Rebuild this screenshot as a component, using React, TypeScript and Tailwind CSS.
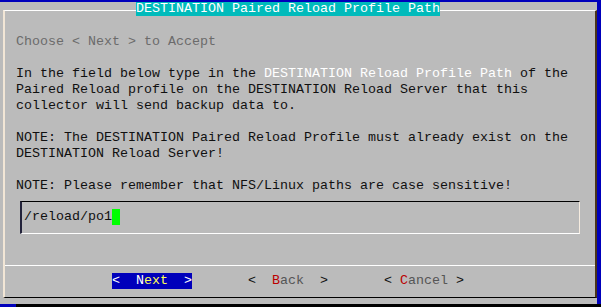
const mono = "font-['Liberation_Mono','Courier_New',monospace] text-[13.333px] leading-4 whitespace-pre"

export default function App() {
  return (
    <div className={`flex h-[307px] w-[601px] flex-col overflow-hidden bg-[#0000bb] ${mono}`}>
      <div className="flex h-[304px] pt-[2px]">
        {/* dialog body */}
        <div className="relative h-[302px] w-[597px] bg-[#bbbbbb]">
          <div className="ml-[3px] mt-[8px] flex h-[288px] w-[594px] flex-col border-b border-l-2 border-r-2 border-t border-b-black border-l-[#f2e6d6] border-r-[#4a3418] border-t-white">
            <div className="flex flex-col pl-[11px] pt-[23px] text-[#101010]">
              <div className="text-[#6b6b6b]">Choose &lt; Next &gt; to Accept</div>
              <div className="h-4" />
              <div>
                {'In the field below type in the '}
                <span className="text-white">DESTINATION Reload Profile Path</span>
                {' of the'}
              </div>
              <div>Paired Reload profile on the DESTINATION Reload Server that this</div>
              <div>collector will send backup data to.</div>
              <div className="h-4" />
              <div>NOTE: The DESTINATION Paired Reload Profile must already exist on the</div>
              <div>DESTINATION Reload Server!</div>
              <div className="h-4" />
              <div>NOTE: Please remember that NFS/Linux paths are case sensitive!</div>

              {/* input field */}
              <div className="ml-[4px] mt-[7px] h-[33px] w-[560px] border-b border-l-2 border-r border-t border-b-white border-l-[#22223a] border-r-[#f6ece0] border-t-black pl-[2px] pt-[7px]">
                <div className="flex items-center">
                  <span>/reload/po1</span>
                  <span className="h-4 w-2 bg-[#00ff00]" />
                </div>
              </div>
            </div>

            <div className="mt-[31px] h-px bg-white" />

            {/* buttons */}
            <div className="mt-[7px] flex gap-[56px] pl-[107px]">
              <span className="bg-[#0000bb] text-white">
                {'<  '}N<span className="text-[#ffff55]">ext</span>{'  >'}
              </span>
              <span className="text-[#101010]">
                {'<  '}
                <span className="text-[#bb0000]">B</span>
                <span className="text-[#555555]">ack</span>
                {'  >'}
              </span>
              <span className="text-[#101010]">
                {'< '}
                <span className="text-[#bb0000]">C</span>
                <span className="text-[#555555]">ancel</span>
                {' >'}
              </span>
            </div>
          </div>

          {/* title sits over the top frame line */}
          <div className="absolute left-[136px] top-0 h-[14px] bg-[#00bbbb] leading-[14px] text-white">
            DESTINATION Paired Reload Profile Path
          </div>
        </div>
      </div>
      <div className="flex h-[3px]">
        <div className="w-4 bg-[#0000bb]" />
        <div className="flex-1 bg-black" />
      </div>
    </div>
  )
}
